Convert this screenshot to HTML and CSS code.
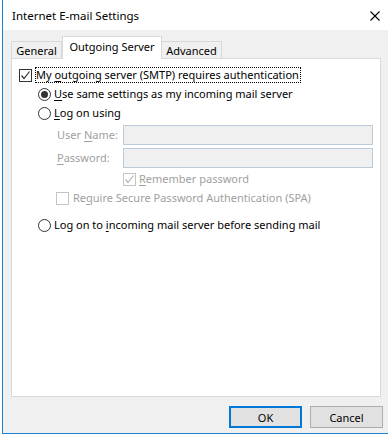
FILE: index.html
```html
<!DOCTYPE html>
<html lang="en">
<head>
	<meta charset="UTF-8">
	<title>Internet E-mail Settings</title>
	<link rel="stylesheet" href="styles.css">
</head>
<body>
	<div class="window">
		<div class="titlebar">
			<span class="title">Internet E-mail Settings</span>
			<svg class="close" width="10" height="10" viewBox="0 0 10 10">
				<path d="M0.5 0.5 L9.5 9.5 M9.5 0.5 L0.5 9.5" stroke="#000" stroke-width="1.1" fill="none"/>
			</svg>
		</div>
		<div class="client">
			<div class="tabs">
				<div class="tab tab_general">General</div>
				<div class="tab tab_active">Outgoing Server</div>
				<div class="tab tab_advanced">Advanced</div>
			</div>
			<div class="panel">
				<div class="row row_auth">
					<span class="check">
						<svg width="11" height="11" viewBox="0 0 11 11"><path d="M1.5 5.5 L4 8.5 L9.5 1.5" fill="none" stroke="#333" stroke-width="1.2"/></svg>
					</span>
					<span class="focus">My <u>o</u>utgoing server (SMTP) requires authentication</span>
				</div>
				<div class="row row_radio">
					<span class="radio radio_on"></span>
					<span><u>U</u>se same settings as my incoming mail server</span>
				</div>
				<div class="row row_radio">
					<span class="radio"></span>
					<span><u>L</u>og on using</span>
				</div>
				<div class="row row_field row_user">
					<span class="field_label">User <u>N</u>ame:</span>
					<span class="field_input"></span>
				</div>
				<div class="row row_field">
					<span class="field_label"><u>P</u>assword:</span>
					<span class="field_input"></span>
				</div>
				<div class="row row_remember">
					<span class="check check_off">
						<svg width="11" height="11" viewBox="0 0 11 11"><path d="M1.5 5.5 L4 8.5 L9.5 1.5" fill="none" stroke="#b4b4b4" stroke-width="1.2"/></svg>
					</span>
					<span class="muted"><u>R</u>emember password</span>
				</div>
				<div class="row row_spa">
					<span class="check check_off"></span>
					<span class="muted">Re<u>q</u>uire Secure Password Authentication (SPA)</span>
				</div>
				<div class="row row_radio row_last">
					<span class="radio"></span>
					<span>Log on to <u>i</u>ncoming mail server before sending mail</span>
				</div>
			</div>
			<div class="buttons">
				<button class="btn btn_default">OK</button>
				<button class="btn">Cancel</button>
			</div>
		</div>
		<!-- watermark from the screenshot -->
		<div class="watermark">
			<div class="wm wm_a">outlooktransfer.com outlooktransfer.com</div>
			<div class="wm wm_b">outlooktransfer.com outlooktransfer.com</div>
			<div class="wm wm_a">outlooktransfer.com outlooktransfer.com</div>
			<div class="wm wm_b">outlooktransfer.com outlooktransfer.com</div>
			<div class="wm wm_a">outlooktransfer.com outlooktransfer.com</div>
			<div class="wm wm_b">outlooktransfer.com outlooktransfer.com</div>
			<div class="wm wm_a">outlooktransfer.com outlooktransfer.com</div>
			<div class="wm wm_b">outlooktransfer.com outlooktransfer.com</div>
			<div class="wm wm_a">outlooktransfer.com outlooktransfer.com</div>
			<div class="wm wm_b">outlooktransfer.com outlooktransfer.com</div>
		</div>
	</div>
</body>
</html>
```

FILE: styles.css
```css
*{box-sizing:border-box}
body{
	margin:0;
	background:#fff;
	font-family:"Noto Sans","Segoe UI",sans-serif;
	font-size:11px;
	color:#000;
}
u{text-decoration:underline;text-underline-offset:2px}

.window{
	position:relative;
	margin-left:2px;
	width:386px;
	height:434px;
	border-left:1px solid #1883d7;
	border-bottom:1px solid #1883d7;
	background:#f0f0f0;
	display:flex;
	flex-direction:column;
	overflow:hidden;
}

.titlebar{
	height:30px;
	background:#fff;
	display:flex;
	align-items:center;
	justify-content:space-between;
	padding:0 8px 0 9px;
	font-size:11.5px;
}
.close{margin-top:1px}

.client{
	flex:1;
	padding:6px 7px 0 8px;
	display:flex;
	flex-direction:column;
}

/* tabs */
.tabs{
	display:flex;
	align-items:flex-end;
	height:22px;
}
.tab{
	height:17px;
	border:1px solid #d9d9d9;
	border-bottom:0;
	text-align:center;
	line-height:17px;
	white-space:nowrap;
}
.tab_general{width:51px}
.tab_advanced{width:60px;border-left:0}
.tab_active{
	width:100px;
	height:23px;
	margin-bottom:-1px;
	background:#fff;
	position:relative;
	z-index:1;
	line-height:20px;
}

.panel{
	height:339px;
	border:1px solid #d9d9d9;
	background:#fff;
	padding:8px 0 0 7px;
}

.row{
	display:flex;
	align-items:center;
	height:16px;
	line-height:16px;
	white-space:nowrap;
}
.row_radio{margin-top:3px;padding-left:19px}
.row_field{margin-top:3px;padding-left:38px;height:20px}
.row_user{margin-top:4px}
.row_remember{margin-top:3px;padding-left:104px}
.row_spa{margin-top:3px;padding-left:37px}
.row_spa .check{margin-right:4px}
.row_last{margin-top:11px}

.check{
	width:13px;
	height:13px;
	flex:none;
	border:1px solid #333;
	background:#fff;
	margin-right:3px;
	display:flex;
	align-items:center;
	justify-content:center;
}
.check_off{border-color:#c4c4c4}
.focus{border:1px dotted #000;padding-right:1px;line-height:14px}

.radio{
	width:13px;
	height:13px;
	flex:none;
	border:1px solid #333;
	border-radius:50%;
	background:#fff;
	margin-right:3px;
	display:flex;
	align-items:center;
	justify-content:center;
}
.radio_on::after{
	content:"";
	width:7px;
	height:7px;
	border-radius:50%;
	background:#333;
}

.field_label{width:66px;color:#a0a0a0}
.field_input{
	width:250px;
	height:20px;
	border:1px solid #bccadb;
	background:#f0f0f0;
}
.muted{color:#a0a0a0}

/* buttons */
.buttons{
	margin-top:9px;
	margin-right:-2px;
	display:flex;
	justify-content:flex-end;
	gap:8px;
}
.btn{
	width:73px;
	height:22px;
	padding:0;
	border:1px solid #adadad;
	background:#e1e1e1;
	font:inherit;
	color:#000;
}
.btn_default{border:2px solid #0078d7}

.watermark{
	position:absolute;
	left:0;
	top:0;
	right:0;
	bottom:0;
	padding-top:4px;
	pointer-events:none;
	overflow:hidden;
	font:bold 38px/42px "Liberation Sans",Arial,sans-serif;
	color:rgba(0,0,0,0.025);
	white-space:nowrap;
}
.wm_a{text-indent:-326px}
.wm_b{text-indent:-189px}
```
